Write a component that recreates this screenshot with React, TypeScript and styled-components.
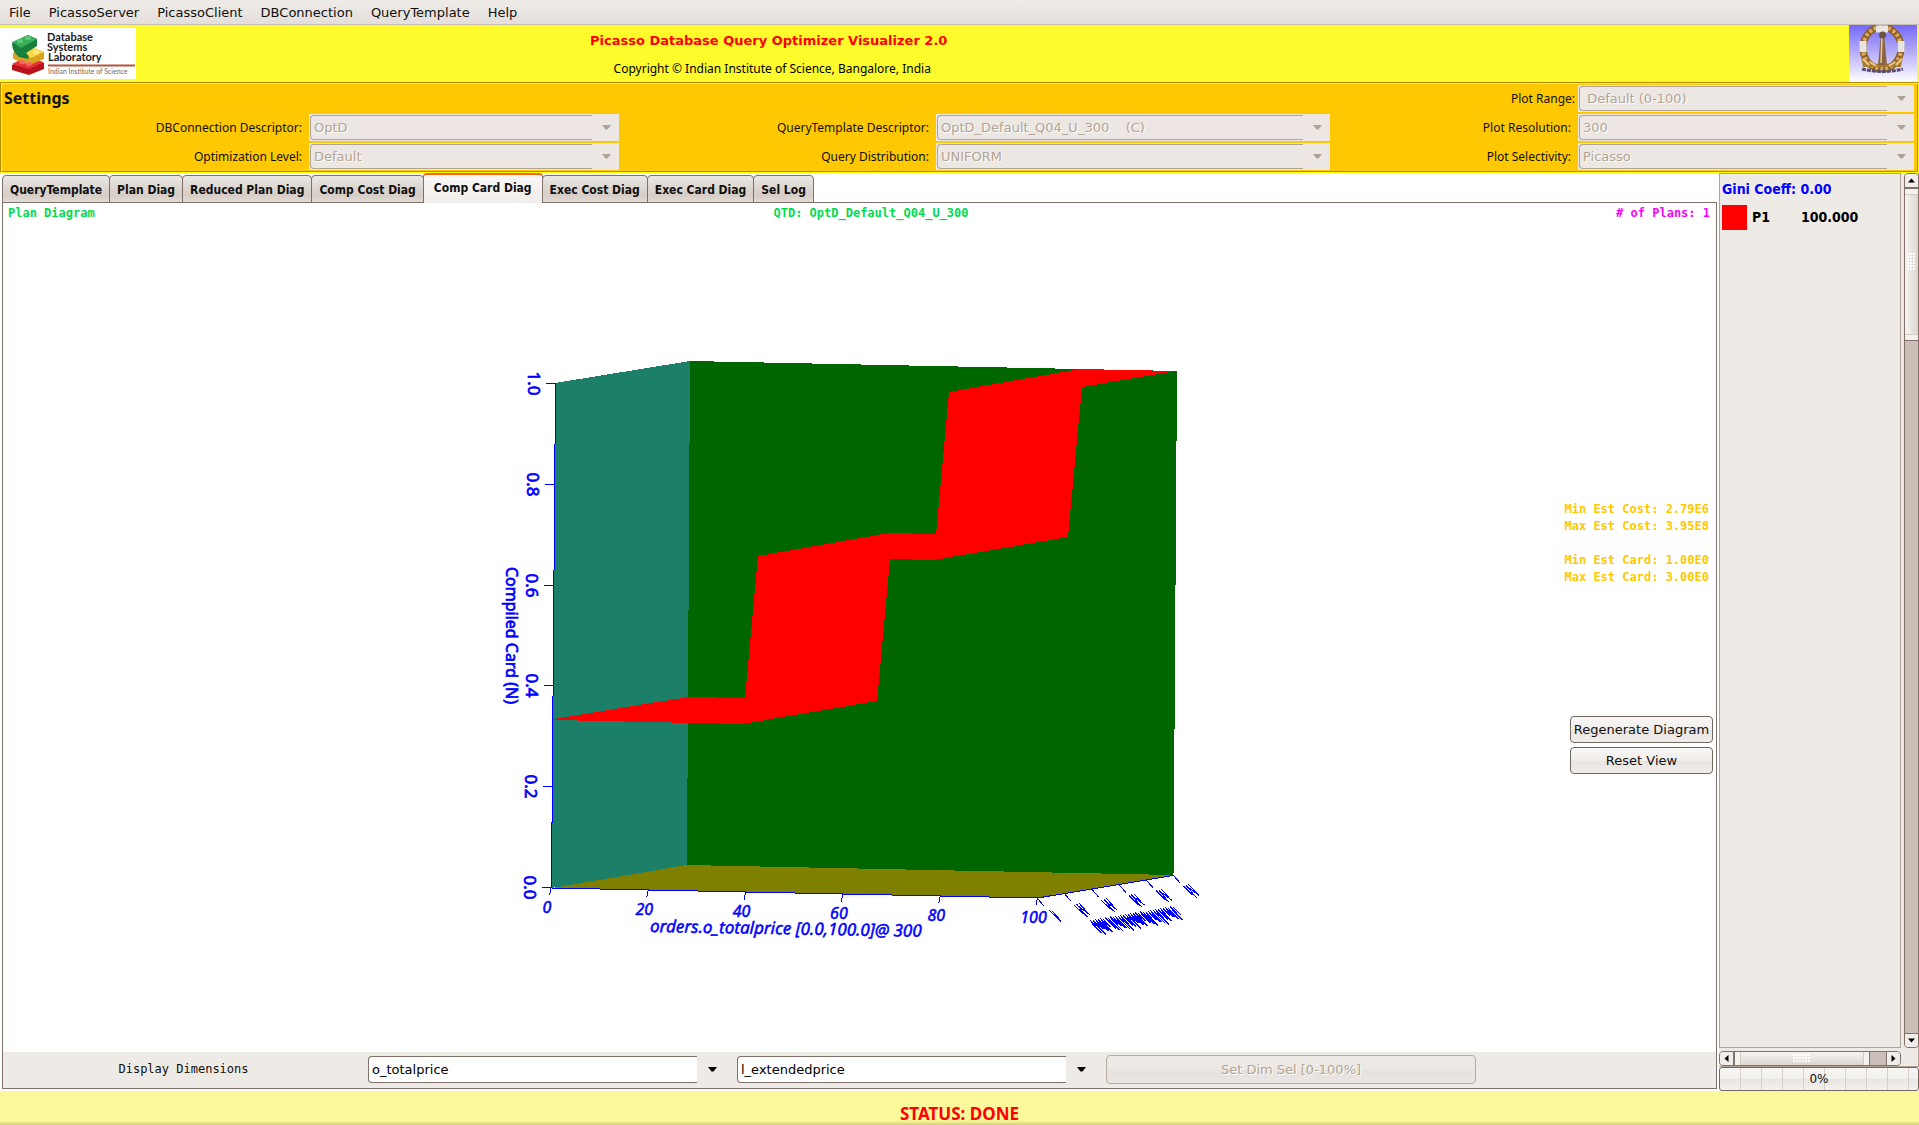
import React from 'react';
import styled, { createGlobalStyle, css } from 'styled-components';

const UI = '"DejaVu Sans", sans-serif';
const HUMANIST = '"Noto Sans", sans-serif';
const NARROW = '"DejaVu Sans Condensed", "DejaVu Sans", sans-serif';
const MONO = '"DejaVu Sans Mono", monospace';

const GlobalStyle = createGlobalStyle`
  * { box-sizing: border-box; }
  body { margin: 0; background: #fff; font: 13px ${UI}; color: #101010; }
  button, select { font: inherit; color: inherit; margin: 0; }
`;

const Page = styled.div`
  min-height: 100vh;
  display: flex;
  flex-direction: column;
`;

/* ---------- menu and header ---------- */

const MenuBar = styled.nav`
  display: flex;
  align-items: center;
  gap: 18px;
  height: 25px;
  padding: 1px 9px 0;
  border-bottom: 1px solid #c6bdb4;
  background: linear-gradient(#eeebe7, #e4dfd9);
`;

const MenuItem = styled.button`
  border: 0;
  padding: 0;
  background: none;
  line-height: 23px;
`;

const Header = styled.header`
  display: grid;
  grid-template-columns: 136px 1266fr 445fr 70px;
  height: 57px;
  background: #fdfb2c;
`;

const LogoSlot = styled.div`
  padding-top: 3px;
  svg { display: block; }
`;

const HeaderText = styled.div`
  text-align: center;
  padding-top: 6px;
`;

const Title = styled.h1`
  margin: 0;
  padding-right: 2px;
  font: bold 13px/20px ${UI};
  color: #f00;
`;

const Copyright = styled.p`
  margin: 9px 0 0;
  padding-left: 5px;
  font: 12px/18px ${HUMANIST};
  color: #000;
`;

const EmblemSlot = styled.div`
  grid-column: 4;
  svg { display: block; }
`;

/* ---------- settings ---------- */

const Settings = styled.section`
  display: grid;
  grid-template-columns: 306fr 310fr 317fr 394fr 248fr 336fr;
  grid-template-rows: repeat(3, 27px);
  row-gap: 2px;
  padding: 2px 4px 2px 2px;
  border: 1px solid;
  border-color: #b28c00 #fcff00 #fcff00 #b28c00;
  box-shadow: inset 1px 1px 0 #fcff00, inset -1px -1px 0 #b28c00;
  background: #ffc800;
`;

const SettingsTitle = styled.h2`
  margin: 0;
  padding-left: 1px;
  grid-area: 1 / 1;
  font: bold 16px/26px ${HUMANIST};
`;

const FieldLabel = styled.label<{ $row: number; $col: number; $tight?: boolean }>`
  grid-area: ${p => p.$row} / ${p => p.$col};
  padding-right: ${p => (p.$tight ? 3 : 7)}px;
  text-align: right;
  font: 12px/27px ${HUMANIST};
`;

const ComboShell = styled.div<{ $row?: number; $col?: number; $off?: boolean }>`
  display: flex;
  align-items: center;
  min-width: 0;
  height: 27px;
  ${p => p.$row && css`grid-area: ${p.$row} / ${p.$col};`}
  ${p => p.$off && css`
    padding: 1px 0 1px 1px;
    background: #ece7e2;
  `}
`;

const Select = styled.select<{ $off?: boolean }>`
  appearance: none;
  flex: 1;
  min-width: 0;
  height: 100%;
  padding: 0 3px;
  border: 1px solid ${p => (p.$off ? '#b0a398' : '#80716a')};
  border-right: 0;
  border-radius: 4px 0 0 4px;
  background: ${p => (p.$off ? '#ece7e2' : '#fff')};
  color: ${p => (p.$off ? '#b0a494' : '#000')};
  opacity: 1;
  text-shadow: ${p => (p.$off ? '1px 1px 0 #fff' : 'none')};
`;

const ArrowBox = styled.span<{ $wide?: boolean }>`
  flex: 0 0 ${p => (p.$wide ? 30 : 27)}px;
  display: flex;
  justify-content: center;
  padding-left: 1px;
`;

/* ---------- workspace ---------- */

const Workspace = styled.main`
  flex: 1;
  display: grid;
  grid-template-columns: minmax(0, 1fr) 200px;
  column-gap: 2px;
  background: #fff;
`;

const LeftPane = styled.section`
  display: flex;
  flex-direction: column;
  padding: 0 0 2px 2px;
`;

const Tabs = styled.div`
  display: flex;
  align-items: flex-end;
  height: 30px;
  margin-bottom: -1px;
  position: relative;
`;

const Tab = styled.button<{ $active?: boolean }>`
  height: ${p => (p.$active ? 30 : 28)}px;
  padding: ${p => (p.$active ? '0 10px 3px' : '2px 7px 0')};
  margin-right: -1px;
  border: 1px solid #80716a;
  border-radius: 4px 4px 0 0;
  background: linear-gradient(#ebe7e3, #ddd7d1 45%, #d6cdc6 75%, #e2dcd6);
  font: bold 12px ${NARROW};
  white-space: nowrap;
  ${p => p.$active && css`
    border-top: 2px solid #f5651d;
    border-bottom: 0;
    background: linear-gradient(#f9f8f7, #f0ece9);
  `}
`;

const Diagram = styled.div`
  flex: 1;
  display: flex;
  flex-direction: column;
  border: 1px solid #80716a;
`;

const Caption = styled.div`
  display: grid;
  grid-template-columns: 1fr auto 1fr;
  height: 21px;
  padding: 1px 6px 0 5px;
  font: bold 12px/18px ${MONO};
  color: #00dc50;
`;

const CaptionCenter = styled.span`
  padding-left: 24px;
`;

const PlanCount = styled.span`
  text-align: right;
  color: #f0f;
`;

const Canvas = styled.div`
  flex: 1;
  display: grid;
  grid-template-columns: 1fr auto 1fr;
  align-items: center;
  padding-top: 34px;
  > svg { grid-column: 2; display: block; }
`;

const Side = styled.div`
  display: flex;
  flex-direction: column;
  align-items: flex-end;
  gap: 4px;
  padding: 0 3px 35px 0;
`;

const Stats = styled.div`
  margin: 0 4px 126px 0;
  font: bold 12px/17px ${MONO};
  color: #ffc800;
  p { margin: 0 0 17px; }
  p:last-child { margin: 0; }
`;

const Button = styled.button<{ $wide?: boolean }>`
  width: ${p => (p.$wide ? '100%' : '143px')};
  height: ${p => (p.$wide ? 29 : 27)}px;
  padding: 0;
  border: 1px solid #716860;
  border-radius: 4px;
  background: linear-gradient(#f8f7f5, #f1eeeb 50%, #e9e5e1 51%, #f0edea);
  white-space: nowrap;
  &:disabled {
    border-color: #b5aaa0;
    background: linear-gradient(#eeebe7, #ebe7e3 50%, #e6e1dc 51%, #eae6e1);
    color: #b0a494;
    text-shadow: 1px 1px 0 #fff;
  }
`;

const DimensionBar = styled.div`
  display: grid;
  grid-template-columns: 365fr 369fr 369fr 370fr 240fr;
  align-items: center;
  height: 36px;
  padding-bottom: 2px;
  background: #eeebe7;
  ${ComboShell} { margin-right: 10px; }
`;

const DimensionLabel = styled.span`
  padding-right: 4px;
  text-align: center;
  font: 12px/18px ${MONO};
`;

/* ---------- legend sidebar ---------- */

const Sidebar = styled.aside`
  display: flex;
  flex-direction: column;
`;

const ScrollFrame = styled.div`
  flex: 1;
  display: grid;
  grid-template-columns: 182px 15px;
  grid-template-rows: 1fr 15px;
  gap: 3px;
  border-right: 1px solid #b0a398;
  border-bottom: 1px solid #b0a398;
  background: #eeebe7;
`;

const Legend = styled.div`
  padding: 3px 2px;
  border: 1px solid #b0a398;
`;

const Gini = styled.div`
  font: bold 14px/24px ${NARROW};
  color: #00f;
`;

const PlanTable = styled.table`
  border-spacing: 0;
  margin-top: 4px;
  font: bold 14px/25px ${NARROW};
  color: #000;
  td { padding: 0; }
  td:nth-child(2) { width: 54px; padding-left: 5px; }
`;

const Swatch = styled.div`
  width: 25px;
  height: 25px;
  background: #f00;
`;

const Track = styled.div<{ $vertical?: boolean }>`
  display: flex;
  flex-direction: ${p => (p.$vertical ? 'column' : 'row')};
  border: 1px solid #80716a;
  border-radius: 4px;
  background: #cabfb6;
  overflow: hidden;
`;

const StepButton = styled.button`
  flex: 0 0 13px;
  display: flex;
  align-items: center;
  justify-content: center;
  min-width: 13px;
  height: 13px;
  padding: 0;
  border: 0;
  background: #f0edea;
`;

const Thumb = styled.div<{ $vertical?: boolean }>`
  display: flex;
  align-items: center;
  justify-content: center;
  ${p => p.$vertical
    ? css`
        flex: 0 0 154px;
        padding-bottom: 6px;
        border: solid #80716a;
        border-width: 2px 0 1px;
        background: linear-gradient(90deg, #f6f4f2, #ddd5cf);
        box-shadow: inset 0 5px 0 #f4f1ee, inset 0 6px 0 #d4cbc4, inset 0 -5px 0 #f4f1ee, inset 0 -6px 0 #d4cbc4;
      `
    : css`
        flex: 0 0 137px;
        border: solid #80716a;
        border-width: 0 1px 0 2px;
        background: linear-gradient(#f6f4f2, #ddd5cf);
        box-shadow: inset 5px 0 0 #f4f1ee, inset 6px 0 0 #d4cbc4, inset -5px 0 0 #f4f1ee, inset -6px 0 0 #d4cbc4;
      `}
`;

const Grip = styled.span<{ $vertical?: boolean }>`
  width: ${p => (p.$vertical ? 9 : 18)}px;
  height: ${p => (p.$vertical ? 18 : 9)}px;
  background: radial-gradient(circle at 1px 1px, #fff 1px, transparent 1px) 0 0 / 3px 3px;
`;

const Spacer = styled.div<{ $edge: 'top' | 'left' }>`
  flex: 1;
  ${p => (p.$edge === 'top' ? css`border-bottom: 1px solid #80716a;` : css`border-right: 1px solid #80716a;`)}
`;

const Progress = styled.div`
  height: 24px;
  border: 1px solid #716860;
  border-radius: 3px;
  background:
    repeating-linear-gradient(90deg, transparent 0 20px, #d5d0cb 20px 21px),
    linear-gradient(#f8f7f5, #f1eeeb 50%, #e9e5e1 51%, #f3f0ee);
  text-align: center;
  font: 12px/22px ${UI};
`;

const Status = styled.footer`
  height: 34px;
  padding-top: 12px;
  background: linear-gradient(transparent 30px, #cfcd7c) #faf89a;
  text-align: center;
  font: bold 17px/22px ${HUMANIST};
  color: #f00;
`;

/* ---------- drawings ---------- */

const Down = ({ color = '#000' }: { color?: string }) => (
  <svg width="9" height="5" viewBox="0 0 9 5" aria-hidden="true"><path d="M0 0h9L5.5 4.5h-2z" fill={color} /></svg>
);

const StepArrow = ({ turn }: { turn: number }) => (
  <svg width="7" height="7" viewBox="0 0 7 7" aria-hidden="true">
    <path d="M0 1.5h7L3.5 5.5z" fill="#000" transform={`rotate(${turn} 3.5 3.5)`} />
  </svg>
);

const LabLogo = () => (
  <svg width="136" height="51" viewBox="0 0 136 51" role="img" aria-label="Database Systems Laboratory">
    <rect width="136" height="51" fill="#fff" />
    <path d="M12 37l14-7 18 5v6L29 47l-17-5z" fill="#b9141c" />
    <path d="M12 36l14-7 18 5-15 7z" fill="#e8323a" />
    <path d="M13 25l14-6 17 5v7l-15 6-16-6z" fill="#d9a51d" />
    <path d="M20 23l10-5 14 6-13 6z" fill="#f9d548" />
    <path d="M12 15L28 7l9 4v7l-11 7q4 3 2 6l-9-2q-7-5-7-14z" fill="#17803c" />
    <path d="M12 14L28 7l9 4-16 9z" fill="#39ad58" />
    <ellipse cx="20" cy="13" rx="3" ry="2" fill="#5ec878" />
    <ellipse cx="28" cy="10" rx="3" ry="2" fill="#5ec878" />
    <ellipse cx="36" cy="24" rx="3" ry="2" fill="#ffe87c" />
    <ellipse cx="29" cy="36" rx="3" ry="2" fill="#f4656a" />
    <ellipse cx="22" cy="34" rx="3" ry="2" fill="#f4656a" />
    <g fontFamily="Lato, sans-serif" fontWeight="bold" fontSize="11" fill="#1a1a1a">
      <text x="47" y="13">Database</text>
      <text x="47" y="23">Systems</text>
      <text x="48" y="33">Laboratory</text>
    </g>
    <path d="M48 37.5h87" stroke="#b4573c" strokeWidth="2" />
    <text x="48" y="46" fontFamily="Lato, sans-serif" fontSize="7" fill="#7d6456">Indian Institute of Science</text>
  </svg>
);

const Emblem = () => (
  <svg width="68" height="57" viewBox="0 0 68 57" role="img" aria-label="Indian Institute of Science emblem">
    <defs>
      <linearGradient id="sky" x1="0" y1="0" x2="0" y2="1">
        <stop offset="0" stopColor="#7468f8" />
        <stop offset="0.5" stopColor="#b9b0f8" />
        <stop offset="1" stopColor="#fff" />
      </linearGradient>
    </defs>
    <rect width="68" height="57" fill="url(#sky)" />
    <ellipse cx="33" cy="23" rx="19" ry="21" fill="none" stroke="#8c5e28" strokeWidth="7" />
    <ellipse cx="33" cy="23" rx="19" ry="21" fill="none" stroke="#d9a95c" strokeWidth="4" strokeDasharray="3 2" />
    <path d="M27 4h12M14 16v11M52 16v11" stroke="#e9e6e2" strokeWidth="7" />
    <path d="M12 31q9 9 21 8 12 1 21-8l-2 11H14z" fill="#a87a34" />
    <path d="M14 34l6 6m1-3l6 4m26-7l-6 6m-1-3l-6 4" stroke="#ecc980" strokeWidth="2" />
    <path d="M32 9h3l3 31h-9z" fill="#8a6440" />
    <path d="M33 12l-1 26" stroke="#e2c9a0" strokeWidth="1.5" />
    <circle cx="33.500" cy="10" r="3.500" fill="#6e553c" />
    <path d="M13 44q20 5 41 0" stroke="#5a4c6e" strokeWidth="3" fill="none" strokeDasharray="4 1" />
  </svg>
);

const yTicks = [0, 1, 2, 3, 4, 5].map(i => ({
  label: ['0.0', '0.2', '0.4', '0.6', '0.8', '1.0'][i],
  x: 551 + Math.round(i * 0.8),
  y: Math.round(887 - i * 100.8) + 0.5,
}));

const xTicks = [0, 1, 2, 3, 4, 5].map(i => ({
  label: String(i * 20),
  x: 551 + i * 97.3,
  y: 888 + i * 2,
}));

const zTicks = [0, 1, 2, 3, 4, 5].map(i => ({ x: 1037 + i * 27.3, y: 898 - i * 4.5 }));

/* The depth axis is seen edge-on, so its labels collapse into slanted strokes. */
const zLabelStrokes = zTicks.flatMap(({ x, y }, i) => {
  const sx = x + 12;
  const sy = y + 12 - i * 0.3;
  if (i === 0) return [`M${sx} ${sy}l12 12`, `M${sx + 3} ${sy + 1}l9 10`];
  return [0, 1, 2, 3, 4].map(k => `M${sx + k * 1.2 - 2} ${sy + (k % 2) * 2 - k * 0.5}l${9 + (k % 2) * 3} ${9 + (k % 3)}`);
});

const zTitleStrokes = Array.from({ length: 84 }, (_, k) => k)
  .filter(k => k % 19 !== 17)
  .map(k => {
    const x = 1090 + k;
    const y = 922 - k * 0.17 + ((k * 7) % 5) - 2;
    const len = 6 + ((k * 5) % 7);
    return `M${x} ${y}l${len} ${len}`;
  });

const CardinalityPlot = () => (
  <svg width="719" height="610" viewBox="500 350 719 610" role="img" aria-label="Compiled cardinality plot">
    <g shapeRendering="crispEdges">
      <polygon points="555,383 690,361 687,867 551,888" fill="#1b8067" />
      <polygon points="690,361 1177,371 1173.500,875 687,865" fill="#006600" />
      <polygon points="552,888 687,865 1173.500,875 1037,898" fill="#808000" />
      <polygon
        fill="#f00"
        points="554,719 688,697 745,698 758,556 889,533 936,534 949,392 1080,369 1176,371 1082,387 1068,537 934,560 890,559 877,701 742,724 554,720"
      />
      <g stroke="#00f" fill="none">
        <path d="M555.500 383L551.500 888L1037.500 898L1173.500 875.500" />
        {yTicks.map(t => <path key={t.label} d={`M${t.x - 9} ${t.y}h9`} />)}
        {xTicks.map(t => <path key={t.label} d={`M${t.x} ${t.y}l-1.500 7.500`} />)}
        {zTicks.map(t => <path key={t.x} d={`M${t.x} ${t.y}l7 8`} />)}
        {zLabelStrokes.map(d => <path key={d} d={d} />)}
        {zTitleStrokes.map(d => <path key={d} d={d} />)}
      </g>
    </g>
    <g fontFamily={HUMANIST} fontSize="16" fill="#00f" stroke="#00f" strokeWidth="0.700">
      <g fontSize="17">
        {yTicks.map((t, i) => (
          <text key={t.label} transform={`translate(${524 + Math.round(i * 0.8)} ${t.y - 12}) rotate(90)`}>{t.label}</text>
        ))}
      </g>
      <text transform="translate(506 567) rotate(90)">Compiled Card (N)</text>
      <g fontStyle="italic" strokeWidth="0.500">
        {xTicks.map(t => (
          <text key={t.label} x={t.x - 4} y={t.y + 25} textAnchor="middle">{t.label}</text>
        ))}
        <text fontSize="17" transform="translate(650 932) rotate(1)">orders.o_totalprice [0.0,100.0]@ 300</text>
      </g>
    </g>
  </svg>
);

/* ---------- data ---------- */

const MENUS = ['File', 'PicassoServer', 'PicassoClient', 'DBConnection', 'QueryTemplate', 'Help'];
const TABS = ['QueryTemplate', 'Plan Diag', 'Reduced Plan Diag', 'Comp Cost Diag', 'Comp Card Diag', 'Exec Cost Diag', 'Exec Card Diag', 'Sel Log'];
const ACTIVE_TAB = 'Comp Card Diag';

const FIELDS = [
  { id: 'db', label: 'DBConnection Descriptor:', value: 'OptD', row: 2, col: 1 },
  { id: 'opt', label: 'Optimization Level:', value: 'Default', row: 3, col: 1 },
  { id: 'qt', label: 'QueryTemplate Descriptor:', value: 'OptD_Default_Q04_U_300\u00a0\u00a0\u00a0\u00a0(C)', row: 2, col: 3 },
  { id: 'dist', label: 'Query Distribution:', value: 'UNIFORM', row: 3, col: 3 },
  { id: 'range', label: 'Plot Range:', value: '\u00a0Default (0-100)', row: 1, col: 5, tight: true },
  { id: 'res', label: 'Plot Resolution:', value: '300', row: 2, col: 5 },
  { id: 'sel', label: 'Plot Selectivity:', value: 'Picasso', row: 3, col: 5 },
];

export default function App() {
  return (
    <Page>
      <GlobalStyle />
      <MenuBar>{MENUS.map(m => <MenuItem key={m}>{m}</MenuItem>)}</MenuBar>
      <Header>
        <LogoSlot><LabLogo /></LogoSlot>
        <HeaderText>
          <Title>Picasso Database Query Optimizer Visualizer 2.0</Title>
          <Copyright>Copyright © Indian Institute of Science, Bangalore, India</Copyright>
        </HeaderText>
        <EmblemSlot><Emblem /></EmblemSlot>
      </Header>

      <Settings>
        <SettingsTitle>Settings</SettingsTitle>
        {FIELDS.map(f => (
          <React.Fragment key={f.id}>
            <FieldLabel htmlFor={f.id} $row={f.row} $col={f.col} $tight={f.tight}>{f.label}</FieldLabel>
            <ComboShell $row={f.row} $col={f.col + 1} $off>
              <Select id={f.id} disabled $off><option>{f.value}</option></Select>
              <ArrowBox><Down color="#b0a398" /></ArrowBox>
            </ComboShell>
          </React.Fragment>
        ))}
      </Settings>

      <Workspace>
        <LeftPane>
          <Tabs role="tablist">
            {TABS.map(t => <Tab key={t} role="tab" aria-selected={t === ACTIVE_TAB} $active={t === ACTIVE_TAB}>{t}</Tab>)}
          </Tabs>
          <Diagram>
            <Caption>
              <span>Plan Diagram</span>
              <CaptionCenter>QTD: OptD_Default_Q04_U_300</CaptionCenter>
              <PlanCount># of Plans: 1</PlanCount>
            </Caption>
            <Canvas>
              <CardinalityPlot />
              <Side>
                <Stats>
                  <p>Min Est Cost: 2.79E6<br />Max Est Cost: 3.95E8</p>
                  <p>Min Est Card: 1.00E0<br />Max Est Card: 3.00E0</p>
                </Stats>
                <Button>Regenerate Diagram</Button>
                <Button>Reset View</Button>
              </Side>
            </Canvas>
            <DimensionBar>
              <DimensionLabel>Display Dimensions</DimensionLabel>
              <ComboShell>
                <Select aria-label="First dimension"><option>o_totalprice</option></Select>
                <ArrowBox $wide><Down /></ArrowBox>
              </ComboShell>
              <ComboShell>
                <Select aria-label="Second dimension"><option>l_extendedprice</option></Select>
                <ArrowBox $wide><Down /></ArrowBox>
              </ComboShell>
              <Button $wide disabled>Set Dim Sel [0-100%]</Button>
            </DimensionBar>
          </Diagram>
        </LeftPane>

        <Sidebar>
          <ScrollFrame>
            <Legend>
              <Gini>Gini Coeff: 0.00</Gini>
              <PlanTable>
                <tbody>
                  <tr><td><Swatch /></td><td>P1</td><td>100.000</td></tr>
                </tbody>
              </PlanTable>
            </Legend>
            <Track $vertical>
              <StepButton aria-label="Scroll up"><StepArrow turn={180} /></StepButton>
              <Thumb $vertical><Grip $vertical /></Thumb>
              <Spacer $edge="top" />
              <StepButton aria-label="Scroll down"><StepArrow turn={0} /></StepButton>
            </Track>
            <Track>
              <StepButton aria-label="Scroll left"><StepArrow turn={90} /></StepButton>
              <Thumb><Grip /></Thumb>
              <Spacer $edge="left" />
              <StepButton aria-label="Scroll right"><StepArrow turn={-90} /></StepButton>
            </Track>
          </ScrollFrame>
          <Progress role="progressbar" aria-valuenow={0}>0%</Progress>
        </Sidebar>
      </Workspace>
      <Status>STATUS: DONE</Status>
    </Page>
  );
}
